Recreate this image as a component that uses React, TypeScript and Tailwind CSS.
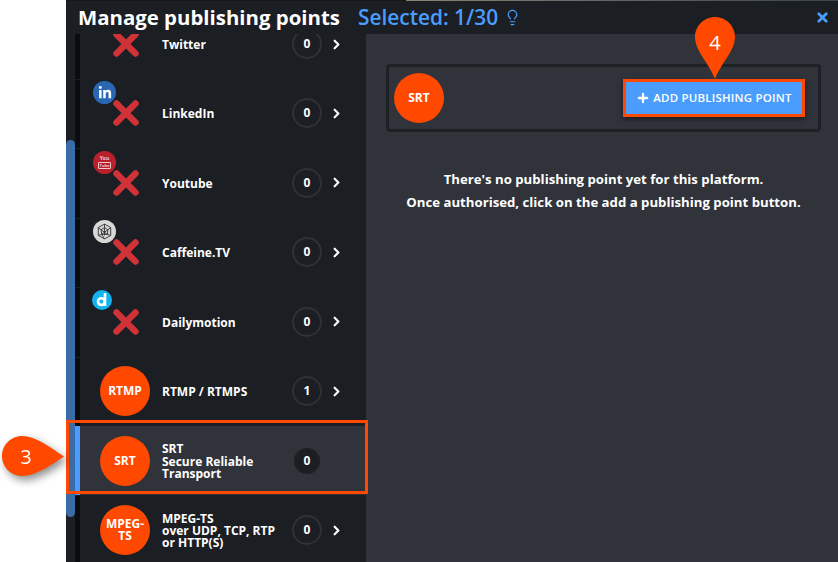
import { ChevronRight, Lightbulb, Plus, X } from "lucide-react";
import { FaLinkedinIn } from "react-icons/fa";
import type { ReactNode } from "react";

const font = { fontFamily: '"Open Sans", sans-serif' };

function RedX() {
  return (
    <svg className="absolute left-[12px] top-[11px]" width="28" height="28" viewBox="0 0 28 28">
      <path d="M4.5 4.5 L23.5 23.5 M23.5 4.5 L4.5 23.5" stroke="#cf3237" strokeWidth="6.5" strokeLinecap="round" />
    </svg>
  );
}

function SocialIcon({ badge }: { badge?: ReactNode }) {
  return (
    <div className="relative w-[50px] h-[50px]">
      {badge}
      <RedX />
    </div>
  );
}

const linkedin = (
  <div className="absolute left-[-7px] top-[-7px] w-[23px] h-[23px] rounded-full bg-[#2a67b2] flex items-center justify-center text-white">
    <FaLinkedinIn size={14} />
  </div>
);
const youtube = (
  <div className="absolute left-[-7px] top-[-7px] w-[23px] h-[23px] rounded-full bg-[#b9202c] flex flex-col items-center justify-center text-[#eec9c9] leading-none">
    <span className="text-[5px] font-bold leading-[7px]">You</span>
    <span className="text-[4px] font-bold leading-[5px] border border-[#eec9c9] rounded-[1px] px-[1px]">Tube</span>
  </div>
);
const caffeine = (
  <div className="absolute left-[-7px] top-[-7px] w-[23px] h-[23px] rounded-full bg-[#d8d8d8] flex items-center justify-center">
    <svg width="17" height="17" viewBox="0 0 15 15" fill="none" stroke="#333" strokeWidth="0.8">
      <path d="M7.5 1 L13 4 L13 11 L7.5 14 L2 11 L2 4 Z M7.5 4 L10.5 6 L10 10 L5 10 L4.5 6 Z M7.5 1 L7.5 4 M13 4 L10.5 6 M13 11 L10 10 M7.5 14 L5 10 M2 11 L5 10 M2 4 L4.5 6 M4.5 6 L10 10 M10.5 6 L5 10 M7.5 4 L7.5 11" />
    </svg>
  </div>
);
const dailymotion = (
  <div className="absolute left-[-8px] top-[-7px] w-[20px] h-[20px] rounded-full bg-[#12b4f0] flex items-center justify-center">
    <svg width="12" height="14" viewBox="0 0 12 14" fill="none" stroke="#fff" strokeWidth="2.6">
      <circle cx="5.4" cy="8.6" r="3.4" />
      <path d="M9 0 V13" />
    </svg>
  </div>
);

function Platform({ label }: { label: string }) {
  return (
    <div className="w-[50px] h-[50px] rounded-full bg-[#ff4800] flex items-center justify-center text-center text-white font-bold text-[12px] leading-[12px]">
      {label}
    </div>
  );
}

function Count({ n, active }: { n: number; active?: boolean }) {
  return active ? (
    <div className="w-[26px] h-[26px] rounded-full bg-[#1b1e23] flex items-center justify-center text-white text-[12px] font-bold">
      {n}
    </div>
  ) : (
    <div className="w-[30px] h-[30px] rounded-full border-2 border-[#2e3137] flex items-center justify-center text-white text-[12px] font-bold">
      {n}
    </div>
  );
}

type RowProps = { icon: ReactNode; lines: string[]; n: number; active?: boolean };

function Row({ icon, lines, n, active }: RowProps) {
  return (
    <div className={`h-[69.45px] flex items-center shrink-0 ${active ? "bg-[#30333a]" : ""}`}>
      <div
        className={`w-[5px] self-stretch shrink-0 ${active ? "bg-[#4a9dfc]" : "bg-[#0b0c0f] border-t border-[#1b1e23]"}`}
      />
      <div className="w-[82px] pl-[20px] shrink-0">{icon}</div>
      <div className="w-[130px] mt-[2px] shrink-0 text-white text-[12px] font-bold leading-[12.3px]">
        {lines.map((l) => (
          <div key={l}>{l}</div>
        ))}
      </div>
      <div className="w-[30px] flex justify-center shrink-0">
        <Count n={n} active={active} />
      </div>
      {!active && <ChevronRight className="ml-[7px] text-white" size={15} strokeWidth={3.5} />}
    </div>
  );
}

export default function App() {
  return (
    <div className="relative w-[838px] h-[562px] overflow-hidden bg-white" style={font}>
      <div className="ml-[66px] w-[772px] h-full flex flex-col bg-[#1b1e23]">
        <div className="h-px shrink-0 flex bg-[#14161a]">
          <div className="ml-[340px] flex-1 bg-gradient-to-r from-[#8a8478] to-[#3c4450]" />
        </div>
        <header className="h-[33px] shrink-0 flex items-center pl-[12px] pr-[8px]">
          <h1 className="text-[20.4px] font-bold text-white leading-none">Manage publishing points</h1>
          <span className="ml-[18px] text-[20.9px] font-semibold text-[#4a9dfc] leading-none">Selected: 1/30</span>
          <Lightbulb className="ml-[6px] text-[#4a9dfc]" size={17} strokeWidth={1.75} />
          <X className="ml-auto text-[#4a9dfc]" size={15} strokeWidth={4.5} />
        </header>
        <div className="flex-1 flex min-h-0">
          <aside className="relative w-[300px] shrink-0 overflow-hidden flex">
            <div className="w-[9px] shrink-0" />
            <div className="flex-1 min-w-0">
              <div className="-mt-[24.7px]">
                <Row lines={["Twitter"]} n={0} icon={<SocialIcon />} />
                <Row lines={["LinkedIn"]} n={0} icon={<SocialIcon badge={linkedin} />} />
                <Row lines={["Youtube"]} n={0} icon={<SocialIcon badge={youtube} />} />
                <Row lines={["Caffeine.TV"]} n={0} icon={<SocialIcon badge={caffeine} />} />
                <Row lines={["Dailymotion"]} n={0} icon={<SocialIcon badge={dailymotion} />} />
                <Row lines={["RTMP / RTMPS"]} n={1} icon={<Platform label="RTMP" />} />
                <Row active lines={["SRT", "Secure Reliable", "Transport"]} n={0} icon={<Platform label="SRT" />} />
                <Row lines={["MPEG-TS", "over UDP, TCP, RTP", "or HTTP(S)"]} n={0} icon={<Platform label="MPEG-TS" />} />
              </div>
            </div>
            <div className="absolute left-0 top-[106px] w-[9px] h-[377px] rounded-[6px] bg-[#3a6ca8]" />
          </aside>
          <main className="flex-1 bg-[#30333a] pt-[30px] px-[20px]">
            <div className="w-[435px] h-[68px] rounded-[4px] border-[3px] border-[#1d2025] flex items-center justify-between pl-[5px] pr-[13px]">
              <div className="w-[50px] h-[50px] rounded-full bg-[#ff4800] flex items-center justify-center text-white text-[12px] font-bold">
                SRT
              </div>
              <button className="h-[38px] w-[182px] border-[3px] border-[#ff4800] bg-[#4a9dfc] flex items-center justify-center gap-[3px] text-white text-[11.5px] font-semibold tracking-[0.2px] shadow-[0_2px_5px_rgba(0,0,0,0.5)]">
                <Plus size={14} strokeWidth={4} />
                ADD PUBLISHING POINT
              </button>
            </div>
            <div className="mt-[36px] text-center text-white text-[13.2px] font-bold leading-[23px]">
              <p>There's no publishing point yet for this platform.</p>
              <p>Once authorised, click on the add a publishing point button.</p>
            </div>
          </main>
        </div>
      </div>

      {/* Tutorial annotations lying over the page */}
      <div className="absolute left-[66px] top-[420px] w-[302px] h-[74px] border-[3px] border-[#ff4800]" />
      <div className="absolute left-[1px] top-[436px] w-[64px] h-[42px] drop-shadow-[3px_4px_4px_rgba(0,0,0,0.45)]">
        <svg className="absolute inset-0" width="64" height="42" viewBox="0 0 64 42">
          <path d="M21 0 C35 0 50 12 63 20.5 C50 29 35 40 21 40 C10 40 1 31 1 20 C1 9 10 0 21 0 Z" fill="#ff4800" />
        </svg>
        <span className="relative block w-[50px] text-center text-white text-[20px] leading-[41px]">3</span>
      </div>
      <div className="absolute left-[695px] top-[17px] w-[40px] h-[63px]">
        <svg className="absolute inset-0" width="40" height="63" viewBox="0 0 40 63">
          <path d="M20 0 C31 0 40 9 40 20 C40 34 26 46 20 62 C14 46 0 34 0 20 C0 9 9 0 20 0 Z" fill="#ff4800" />
        </svg>
        <span className="relative block text-center text-white text-[20px] leading-[52px]">4</span>
      </div>
    </div>
  );
}
